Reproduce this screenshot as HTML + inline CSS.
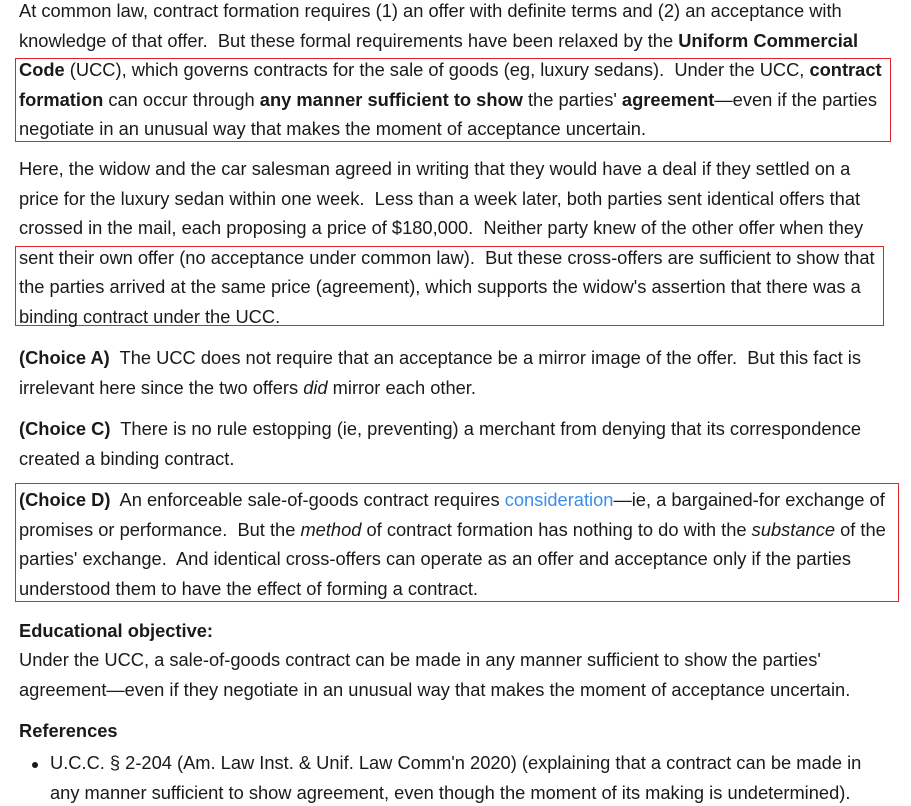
<!DOCTYPE html>
<html><head><meta charset="utf-8"><style>
html,body{margin:0;padding:0;background:#fff;width:911px;height:806px;overflow:hidden}
body{font-family:"Liberation Sans",Arial,sans-serif;font-size:18.3px;color:#1a1a1a;position:relative}
.p{position:absolute;left:19px;line-height:29.5px;white-space:nowrap}
.b{position:absolute;border:1px solid #e0242c;box-sizing:border-box}
a{color:#3b8ded;text-decoration:none}
.bul{position:absolute;left:32px;width:6px;height:6px;border-radius:50%;background:#1a1a1a}
</style></head><body>
<div class="b" style="left:15px;top:58px;width:876px;height:84px"></div>
<div class="b" style="left:15px;top:246px;width:869px;height:80px"></div>
<div class="b" style="left:15px;top:483px;width:884px;height:119px"></div>

<div class="p" style="top:-4px">At common law, contract formation requires (1) an offer with definite terms and (2) an acceptance with<br>knowledge of that offer.&nbsp; But these formal requirements have been relaxed by the <b>Uniform Commercial</b><br><b>Code</b> (UCC), which governs contracts for the sale of goods (eg, luxury sedans).&nbsp; Under the UCC, <b>contract</b><br><b>formation</b> can occur through <b>any manner sufficient to show</b> the parties' <b>agreement</b>—even if the parties<br>negotiate in an unusual way that makes the moment of acceptance uncertain.</div>

<div class="p" style="top:154px">Here, the widow and the car salesman agreed in writing that they would have a deal if they settled on a<br>price for the luxury sedan within one week.&nbsp; Less than a week later, both parties sent identical offers that<br>crossed in the mail, each proposing a price of $180,000.&nbsp; Neither party knew of the other offer when they<br>sent their own offer (no acceptance under common law).&nbsp; But these cross-offers are sufficient to show that<br>the parties arrived at the same price (agreement), which supports the widow's assertion that there was a<br>binding contract under the UCC.</div>

<div class="p" style="top:343px"><b>(Choice A)</b>&nbsp; The UCC does not require that an acceptance be a mirror image of the offer.&nbsp; But this fact is<br>irrelevant here since the two offers <i>did</i> mirror each other.</div>

<div class="p" style="top:414px"><b>(Choice C)</b>&nbsp; There is no rule estopping (ie, preventing) a merchant from denying that its correspondence<br>created a binding contract.</div>

<div class="p" style="top:485px"><b>(Choice D)</b>&nbsp; An enforceable sale-of-goods contract requires <a>consideration</a>—ie, a bargained-for exchange of<br>promises or performance.&nbsp; But the <i>method</i> of contract formation has nothing to do with the <i>substance</i> of the<br>parties' exchange.&nbsp; And identical cross-offers can operate as an offer and acceptance only if the parties<br>understood them to have the effect of forming a contract.</div>

<div class="p" style="top:616px"><b>Educational objective:</b></div>
<div class="p" style="top:645px">Under the UCC, a sale-of-goods contract can be made in any manner sufficient to show the parties'<br>agreement—even if they negotiate in an unusual way that makes the moment of acceptance uncertain.</div>

<div class="p" style="top:716px"><b>References</b></div>
<div class="bul" style="top:762px"></div>
<div class="p" style="top:748px;left:50px">U.C.C. § 2-204 (Am. Law Inst. &amp; Unif. Law Comm'n 2020) (explaining that a contract can be made in<br>any manner sufficient to show agreement, even though the moment of its making is undetermined).</div>
</body></html>
